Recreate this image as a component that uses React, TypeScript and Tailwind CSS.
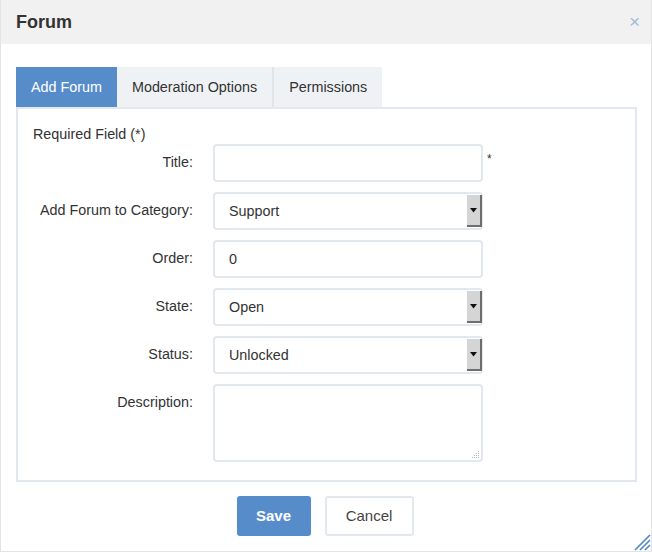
import React from "react";

function Arrow() {
  return (
    <div className="-mr-[1px] flex h-full w-[15px] items-center justify-center border-r-2 border-b-2 border-[#6e6e6e] bg-[#d5d5d5]">
      <svg width="7" height="5" viewBox="0 0 7 5">
        <path d="M0 0 H7 L3.5 4.5 Z" fill="#111" />
      </svg>
    </div>
  );
}

function Row({ label, children }: { label: string; children: React.ReactNode }) {
  return (
    <div className="flex items-start">
      <div className="w-[180px] pr-[20px] pt-[8px] text-right">{label}</div>
      {children}
    </div>
  );
}

function Field({ value, select = false }: { value?: string; select?: boolean }) {
  return (
    <div className="flex h-[38px] w-[270px] items-stretch rounded-[4px] border-2 border-[#e3e8ee] bg-white">
      <div className="flex flex-1 items-center pl-[14px] pt-[2px]">{value}</div>
      {select && (
        <div className="py-[1px]">
          <Arrow />
        </div>
      )}
    </div>
  );
}

export default function App() {
  return (
    <div
      className="relative flex h-[552px] w-[652px] flex-col border-x border-b border-[#e4e4e4] bg-white text-[14.35px] text-[#333]"
      style={{ fontFamily: '"Liberation Sans", Arial, sans-serif' }}
    >
      <div className="flex h-[44px] items-center justify-between bg-[#f1f1f1] pl-[15px] pr-[11px]">
        <div className="text-[18px] font-bold text-[#333]">Forum</div>
        <div className="pb-[2px] text-[19px] leading-none text-[#a4bcdc]">×</div>
      </div>

      <div className="px-[15px] pt-[23px]">
        <div className="flex h-[40px] items-stretch">
          <div className="flex items-center bg-[#578ccb] px-[15px] pt-[2px] text-white">Add Forum</div>
          <div className="flex items-center bg-[#eff2f5] px-[15px] pt-[2px]">Moderation Options</div>
          <div className="flex items-center border-l-2 border-[#dfe5eb] bg-[#eff2f5] px-[15px] pt-[2px]">Permissions</div>
        </div>
        <div className="h-[375px] w-[621px] border-2 border-[#e3e8ee] pl-[15px] pt-[16px]">
          <div className="leading-[18px]">Required Field (*)</div>
          <div className="mt-[1px] flex flex-col gap-[10px]">
            <Row label="Title:">
              <Field />
              <span className="pl-[4px] pt-[6px] text-[12px]">*</span>
            </Row>
            <Row label="Add Forum to Category:">
              <Field value="Support" select />
            </Row>
            <Row label="Order:">
              <Field value="0" />
            </Row>
            <Row label="State:">
              <Field value="Open" select />
            </Row>
            <Row label="Status:">
              <Field value="Unlocked" select />
            </Row>
            <Row label="Description:">
              <div className="relative h-[78px] w-[270px] rounded-[4px] border-2 border-[#e3e8ee] bg-white">
                <svg className="absolute bottom-[1px] right-[1px]" width="8" height="8" viewBox="0 0 8 8">
                  <g fill="#bbb">
                    <rect x="6" y="0" width="1" height="1" />
                    <rect x="4" y="2" width="1" height="1" />
                    <rect x="6" y="2" width="1" height="1" />
                    <rect x="2" y="4" width="1" height="1" />
                    <rect x="4" y="4" width="1" height="1" />
                    <rect x="6" y="4" width="1" height="1" />
                    <rect x="0" y="6" width="1" height="1" />
                    <rect x="2" y="6" width="1" height="1" />
                    <rect x="4" y="6" width="1" height="1" />
                    <rect x="6" y="6" width="1" height="1" />
                  </g>
                </svg>
              </div>
            </Row>
          </div>
        </div>
      </div>

      <div className="mt-[14px] flex justify-center gap-[14px] pr-[2px]">
        <button className="h-[40px] w-[74px] rounded-[3px] bg-[#578ccb] text-[15px] font-bold text-white">Save</button>
        <button className="h-[40px] w-[89px] rounded-[3px] border-2 border-[#e3e8ee] bg-white text-[15px] text-[#444]">Cancel</button>
      </div>

      <svg className="absolute bottom-0 right-0" width="20" height="20" viewBox="0 0 20 20">
        <g stroke="#4a86c8" strokeWidth="1.6">
          <line x1="4" y1="19" x2="19" y2="4" />
          <line x1="9" y1="19" x2="19" y2="9" />
          <line x1="14" y1="19" x2="19" y2="14" />
        </g>
      </svg>
    </div>
  );
}
